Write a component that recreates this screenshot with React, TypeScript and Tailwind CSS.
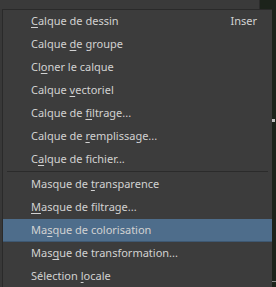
import React from 'react';

type Item = { pre: string; key: string; post: string; shortcut?: string; active?: boolean };

const groupA: Item[] = [
  { pre: '', key: 'C', post: 'alque de dessin', shortcut: 'Inser' },
  { pre: 'Calque ', key: 'd', post: 'e groupe' },
  { pre: 'Cl', key: 'o', post: 'ner le calque' },
  { pre: 'Calque ', key: 'v', post: 'ectoriel' },
  { pre: 'Calque de ', key: 'f', post: 'iltrage...' },
  { pre: 'Calque de ', key: 'r', post: 'emplissage...' },
  { pre: 'C', key: 'a', post: 'lque de fichier...' },
];

const groupB: Item[] = [
  { pre: 'Masque de ', key: 't', post: 'ransparence' },
  { pre: '', key: 'M', post: 'asque de filtrage...' },
  { pre: 'Ma', key: 's', post: 'que de colorisation', active: true },
  { pre: 'Mas', key: 'q', post: 'ue de transformation...' },
  { pre: 'Sélection ', key: 'l', post: 'ocale' },
];

function Row({ item }: { item: Item }) {
  return (
    <div
      className={
        'flex h-[23px] items-center pl-[28px] pr-[15px] ' +
        (item.active ? 'bg-[#4e6d8b] shadow-[inset_0_-1px_0_#3e5872]' : '')
      }
    >
      <span className="flex-1 whitespace-nowrap">
        {item.pre}
        <span className="underline decoration-1 underline-offset-2">{item.key}</span>
        {item.post}
      </span>
      {item.shortcut && <span>{item.shortcut}</span>}
    </div>
  );
}

export default function App() {
  return (
    <div
      className="flex h-[287px] w-[276px] flex-col overflow-hidden bg-[#393939] text-[11px] text-[#d2d2d2]"
      style={{ fontFamily: '"Noto Sans", sans-serif' }}
    >
      {/* strip above the menu */}
      <div className="flex h-[9px] shrink-0">
        <div className="flex-1 bg-[#3a3a3a]" />
        <div className="w-px bg-[#2c2c2c]" />
        <div className="w-[16px] bg-[#1c231b]" />
      </div>

      <div className="flex flex-1">
        <div className="w-[2px] bg-[#383838]" />
        <div className="flex w-[270px] flex-col border-t border-l border-[#2a2a2a] bg-[#3c3c3c]">
          {groupA.map((it) => (
            <Row key={it.pre + it.key + it.post} item={it} />
          ))}
          <div className="flex h-[2px] items-start pl-[4px] pr-[4px]">
            <div className="h-px flex-1 bg-[#2b2b2b]" />
          </div>
          {groupB.map((it) => (
            <Row key={it.pre + it.key + it.post} item={it} />
          ))}
        </div>
        <div className="relative flex-1 bg-[#1c231b]">
          <div className="absolute left-0 top-[110px] h-[3px] w-[3px] bg-[#bdbdbd]" />
          <div className="absolute left-0 top-[272px] h-px w-[4px] bg-[#8a8a8a]" />
        </div>
      </div>
    </div>
  );
}
